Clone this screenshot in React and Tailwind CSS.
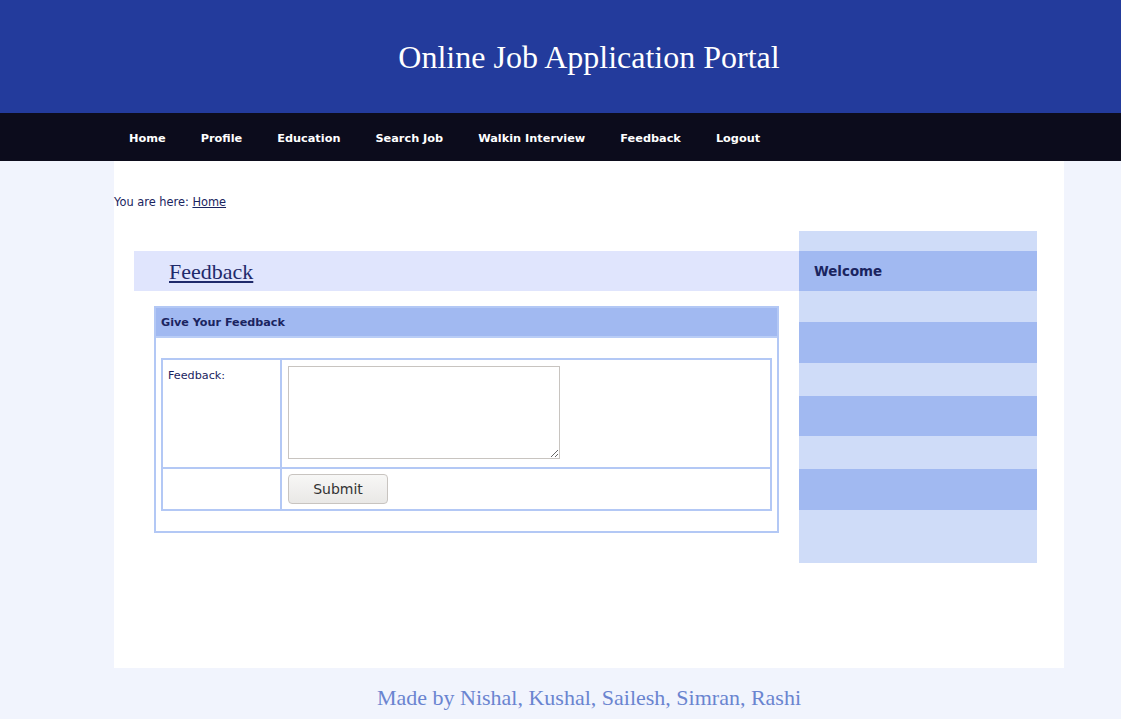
export default function App() {
  const nav = ["Home", "Profile", "Education", "Search Job", "Walkin Interview", "Feedback", "Logout"];
  const sans = { fontFamily: '"DejaVu Sans", Verdana, sans-serif' };
  const serif = { fontFamily: 'Georgia, "Liberation Serif", serif' };
  return (
    <div className="min-h-[719px] bg-[#f1f4fd] text-[#1a2460]" style={sans}>
      <header className="bg-[#233b9c] h-[113px]">
        <div className="ml-[114px] w-[950px] h-full flex items-center justify-center">
          <h1 className="text-white text-[32px] pt-[1px]" style={serif}>
            Online Job Application Portal
          </h1>
        </div>
      </header>
      <nav className="bg-[#0c0c1c] h-[48px]">
        <ul className="ml-[114px] w-[950px] h-full flex items-center pl-[15px] pt-[4px] gap-[35px]">
          {nav.map((n) => (
            <li key={n} className="text-white text-[11.3px] font-bold">{n}</li>
          ))}
        </ul>
      </nav>
      <main className="ml-[114px] w-[950px] bg-white h-[507px]">
        <div className="pt-[33px] text-[11.4px] leading-[16px]">
          You are here: <span className="underline">Home</span>
        </div>
        <div className="flex pl-[20px] pt-[21px]">
          <div className="w-[665px] pt-[20px]">
            <div className="h-[40px] bg-[#e0e5fd] flex items-center pl-[35px]">
              <a className="underline text-[22px] text-[#1f2a6b]" style={serif}>Feedback</a>
            </div>
            <div className="mx-[20px] mt-[15px] h-[227px] border-2 border-[#b3c8f5]">
              <div className="h-[30px] bg-[#a1b9f1] border-b-2 border-[#b9cdf6] flex items-center pl-[5px] pt-[3px] text-[11.2px] font-bold">
                Give Your Feedback
              </div>
              <div className="px-[5px] pt-[20px]">
                <div className="border-2 border-[#b3c8f5]">
                  <div className="flex h-[109px] border-b-2 border-[#b3c8f5]">
                    <div className="w-[119px] border-r-2 border-[#b3c8f5] text-[11.2px] pl-[5px] pt-[8px]">Feedback:</div>
                    <div className="flex-1 p-[6px]">
                      <textarea className="block w-[272px] h-[93px] border border-[#c8c4c0] bg-white resize" />
                    </div>
                  </div>
                  <div className="flex h-[40px]">
                    <div className="w-[119px] border-r-2 border-[#b3c8f5]" />
                    <div className="flex-1 pl-[6px] pt-[5px]">
                      <button className="w-[100px] h-[30px] border border-[#c8c4c0] rounded-[4px] bg-gradient-to-b from-[#f7f7f6] to-[#e9e8e6] text-[14px] text-[#333]">
                        Submit
                      </button>
                    </div>
                  </div>
                </div>
              </div>
            </div>
          </div>
          <aside className="w-[238px]">
            <div className="h-[20px] bg-[#cfdcf8]" />
            <div className="h-[40px] bg-[#a1b9f1] flex items-center pl-[15px] pt-[2px] text-[13.4px] font-bold">Welcome</div>
            <div className="h-[31px] bg-[#cfdcf8]" />
            <div className="h-[41px] bg-[#a1b9f1]" />
            <div className="h-[33px] bg-[#cfdcf8]" />
            <div className="h-[40px] bg-[#a1b9f1]" />
            <div className="h-[33px] bg-[#cfdcf8]" />
            <div className="h-[41px] bg-[#a1b9f1]" />
            <div className="h-[53px] bg-[#cfdcf8]" />
          </aside>
        </div>
      </main>
      <footer className="ml-[114px] w-[950px] h-[51px] flex items-center justify-center">
        <p className="text-[#6a84d0] text-[22px] pt-[8px]" style={serif}>
          Made by Nishal, Kushal, Sailesh, Simran, Rashi
        </p>
      </footer>
    </div>
  );
}
